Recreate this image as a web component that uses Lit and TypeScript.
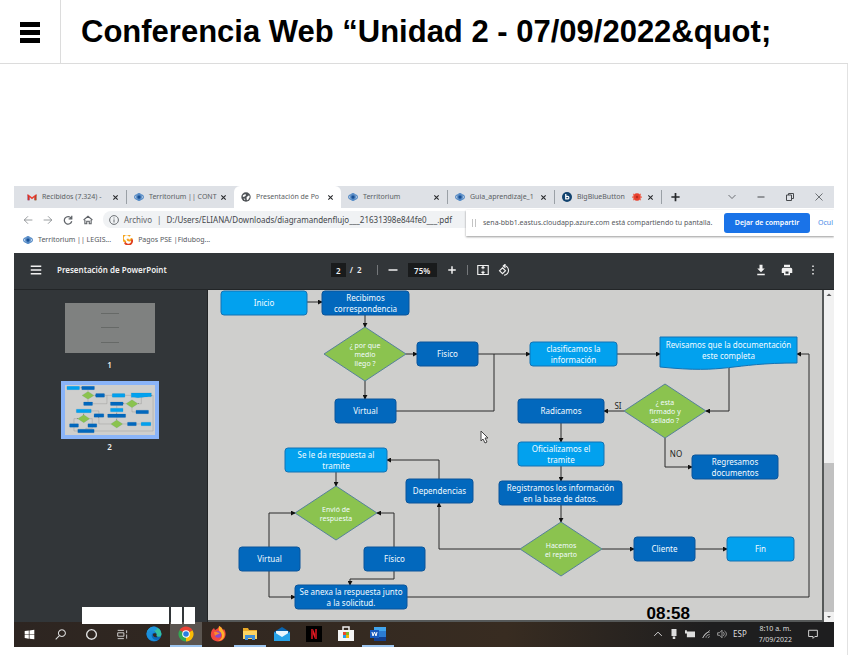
import { LitElement, html, css, svg, nothing } from "lit";
import { customElement, property } from "lit/decorators.js";
import { classMap } from "lit/directives/class-map.js";

type Kind = "light" | "dark" | "diamond" | "document";
interface FlowNode { kind: Kind; x: number; y: number; w: number; h: number; lines: string[]; }

const NODES: FlowNode[] = [
  { kind: "light", x: 13, y: 1, w: 86, h: 24, lines: ["Inicio"] },
  { kind: "dark", x: 114, y: 1, w: 87, h: 24, lines: ["Recibimos", "correspondencia"] },
  { kind: "diamond", x: 116, y: 37, w: 82, h: 54, lines: ["¿ por que", "medio", "llego ?"] },
  { kind: "dark", x: 209, y: 52, w: 61, h: 24, lines: ["Fisico"] },
  { kind: "dark", x: 127, y: 109, w: 61, h: 24, lines: ["Virtual"] },
  { kind: "light", x: 322, y: 52, w: 87, h: 24, lines: ["clasificamos la", "información"] },
  { kind: "document", x: 452, y: 47, w: 137, h: 32, lines: ["Revisamos que la documentación", "este completa"] },
  { kind: "diamond", x: 416, y: 94, w: 82, h: 54, lines: ["¿ esta", "firmado y", "sellado ?"] },
  { kind: "dark", x: 310, y: 109, w: 86, h: 24, lines: ["Radicamos"] },
  { kind: "light", x: 310, y: 152, w: 86, h: 24, lines: ["Oficializamos el", "tramite"] },
  { kind: "dark", x: 291, y: 191, w: 123, h: 24, lines: ["Registramos los información", "en la base de datos."] },
  { kind: "dark", x: 484, y: 165, w: 86, h: 24, lines: ["Regresamos", "documentos"] },
  { kind: "light", x: 77, y: 158, w: 102, h: 24, lines: ["Se le da respuesta al", "tramite"] },
  { kind: "dark", x: 198, y: 189, w: 67, h: 24, lines: ["Dependencias"] },
  { kind: "diamond", x: 87, y: 196, w: 82, h: 54, lines: ["Envió de", "respuesta"] },
  { kind: "dark", x: 31, y: 257, w: 61, h: 24, lines: ["Virtual"] },
  { kind: "dark", x: 156, y: 257, w: 61, h: 24, lines: ["Físico"] },
  { kind: "dark", x: 87, y: 295, w: 112, h: 24, lines: ["Se anexa la respuesta junto", "a la solicitud."] },
  { kind: "diamond", x: 312, y: 232, w: 82, h: 54, lines: ["Hacemos", "el reparto"] },
  { kind: "dark", x: 426, y: 247, w: 61, h: 24, lines: ["Cliente"] },
  { kind: "light", x: 519, y: 247, w: 67, h: 24, lines: ["Fin"] },
];

const ARROWS = [
  "99,12 114,12", "157,25 157,37", "198,64 209,64", "157,91 157,109", "270,64 322,64",
  "409,64 452,64", "521,78 521,121 498,121", "416,121 396,121", "353,133 353,152",
  "353,176 353,191", "353,215 353,232", "394,259 426,259", "487,259 519,259",
  "312,259 231,259 231,213", "231,189 231,170 179,170", "128,182 128,196",
  "61,257 61,223 87,223", "186,257 186,223 169,223", "61,281 61,307 87,307",
  "186,281 186,289 142,289 142,295", "199,307 601,307 601,64 589,64", "457,148 457,177 484,177",
];

@customElement("flow-chart")
export class FlowChart extends LitElement {
  @property({ type: Boolean }) mini = false;

  static styles = css`
    :host { display: block; }
    svg { display: block; width: 100%; height: auto; }
    .light, .document { fill: #02a1ee; stroke: #1273b4; }
    .dark { fill: #0268bd; stroke: #0a559b; }
    .diamond { fill: #8bc34f; stroke: #56819a; }
    .edge { fill: none; stroke: #2b2b2b; }
    .label { font: 8px "Noto Sans", sans-serif; fill: #f2fbff; text-anchor: middle; }
    .small { font-size: 7px; }
    .tag { fill: #222; }
  `;

  private shape(n: FlowNode) {
    const { x, y, w, h } = n;
    if (n.kind === "diamond") {
      return svg`<polygon class="diamond" points="${x},${y + h / 2} ${x + w / 2},${y} ${x + w},${y + h / 2} ${x + w / 2},${y + h}"/>`;
    }
    if (n.kind === "document") {
      return svg`<path class="document" d="M${x} ${y}h${w}v${h - 6}c-${w / 2} 0 -${w / 2} 11 -${w} 4z"/>`;
    }
    return svg`<rect class=${n.kind} x=${x} y=${y} width=${w} height=${h} rx="3"/>`;
  }

  private label(n: FlowNode) {
    const small = n.kind === "diamond";
    const step = small ? 9 : 11;
    const mid = n.y + n.h / 2 - (n.kind === "document" ? 3 : 0);
    const first = mid + 3 - ((n.lines.length - 1) * step) / 2;
    return n.lines.map((t, i) => svg`<text class=${small ? "label small" : "label"} x=${n.x + n.w / 2} y=${first + i * step}>${t}</text>`);
  }

  render() {
    return html`<svg viewBox="0 0 614 330" role="img" aria-label="Diagrama de flujo">
      <defs><marker id="tip" viewBox="0 0 6 6" refX="5" refY="3" markerWidth="5" markerHeight="5" orient="auto"><path d="M0 0L6 3L0 6z" fill="#111"/></marker></defs>
      <polyline class="edge" points="188,121 286,121 286,64"/>
      ${ARROWS.map((p) => svg`<polyline class="edge" points=${p} marker-end="url(#tip)"/>`)}
      ${NODES.map((n) => svg`${this.shape(n)}${this.mini ? nothing : this.label(n)}`)}
      ${this.mini ? nothing : svg`
        <text class="label tag" x="410" y="119">SI</text>
        <text class="label tag" x="468" y="167">NO</text>
        <path d="M273 141v10l2-2 2 4 2-1-2-4h3z" fill="#fff" stroke="#444"/>`}
    </svg>`;
  }
}

const stroke = (d: string, w = 1.5) => svg`<svg viewBox="0 0 16 16" fill="none" stroke="currentColor" stroke-width=${w}><path d=${d}/></svg>`;
const solid = (d: string) => svg`<svg viewBox="0 0 16 16" fill="currentColor"><path fill-rule="evenodd" d=${d}/></svg>`;

const gmail = svg`<svg viewBox="0 0 16 16"><path d="M1 4v9h3V7z" fill="#4285f4"/><path d="M15 4v9h-3V7z" fill="#34a853"/><path d="M1 3l7 5.500 7-5.500v3l-7 5.500-7-5.500z" fill="#ea4335"/><path d="M1 4v9h3V7zM15 4v9h-3V7z" fill="#d93025"/></svg>`;
const territorium = svg`<svg viewBox="0 0 16 16" fill="none" stroke="#5a8ec8"><ellipse cx="8" cy="8" rx="7" ry="4" stroke-width="2"/><ellipse cx="8" cy="8" rx="4" ry="6" stroke-width="1.500"/><circle cx="8" cy="8" r="3" fill="#174f96" stroke="#2467b0"/></svg>`;
const globe = svg`<svg viewBox="0 0 16 16"><circle cx="8" cy="8" r="7.500" fill="#505458"/><path d="M3 5l4-2 1 2-2 2-3 1zM9 8l4-3 1 3-3 5-2-1zM4 10l3 1-1 2z" fill="#fff"/></svg>`;
const bbb = svg`<svg viewBox="0 0 16 16"><circle cx="8" cy="8" r="8" fill="#12436f"/><path d="M6 3v8h3a2 2 0 0 0 0-4H6" fill="none" stroke="#fff" stroke-width="2"/></svg>`;
const rec = svg`<svg viewBox="0 0 16 16"><circle cx="8" cy="8" r="6" fill="#e8412f"/><path d="M2 3l2 2M14 3l-2 2M2 13l2-2M14 13l-2-2M0 8h3M13 8h3" stroke="#ee6a55" stroke-width="2"/><circle cx="8" cy="8" r="2" fill="#b92c1e"/></svg>`;
const pse = svg`<svg viewBox="0 0 16 16" fill="none" stroke-width="3"><path d="M11 2a6 6 0 1 0-6 9" stroke="#f5a51d"/><path d="M7 6c1 4 6 4 7-1" stroke="#f5a51d"/><path d="M3 12a6 6 0 0 0 11-5" stroke="#e0401f"/></svg>`;
const close = stroke("M3 3l10 10M13 3L3 13", 2.5);

const start = svg`<svg viewBox="0 0 16 16" fill="#fff"><path d="M1 3l6-1v5.500H1zM8 2l7-1v6.500H8zM1 8.500h6V14l-6-1zM8 8.500h7V15l-7-1z"/></svg>`;
const edge = svg`<svg viewBox="0 0 16 16"><circle cx="8" cy="8" r="7.500" fill="#0c69b9"/><path d="M1 6a7.500 7.500 0 0 1 14.500 2c0 3-4 3.500-5 2 1-2-1-5-4-5-2 0-4 .5-5.500 1z" fill="#35c1a0"/><path d="M.5 8a7.500 7.500 0 0 1 9-7.300C13 4 9 5 6 5 4 5 2 6 .5 8z" fill="#2196dd"/><path d="M.5 8c1-4 7-5 9-1-3-1-5 2-3 5 1 2 4 2.500 6 1.500A7.500 7.500 0 0 1 .5 8z" fill="#1b8fdc"/><path d="M7 8c1-1 3-1 3.500 0 0 1-1 2 1 3-3 1-5-1-4.500-3z" fill="#35281f"/></svg>`;
const chrome = svg`<svg viewBox="0 0 16 16"><path d="M8 8L1.500 4.250A7.500 7.500 0 0 1 14.500 4.250z" fill="#ea4335"/><path d="M8 8l6.500-3.750A7.500 7.500 0 0 1 8 15.500z" fill="#fbbc05"/><path d="M8 8v7.500A7.500 7.500 0 0 1 1.500 4.250z" fill="#34a853"/><circle cx="8" cy="8" r="3.800" fill="#fff"/><circle cx="8" cy="8" r="2.800" fill="#2a7de1"/></svg>`;
const firefox = svg`<svg viewBox="0 0 16 16"><path d="M2 4l2-2 1 2c3-1 4-3 4-4 4 2 3 3 4 4l1-1c4 6 0 12.500-6 12.500S-1 10 2 4z" fill="#f4483c"/><path d="M9 0c4 2 3 4 5 6 2 5-2 9-6 9 5-2 5-7 2-9C8 4 9 2 9 0z" fill="#fdb32c"/><circle cx="8" cy="8.500" r="3.200" fill="#8a4bc8"/><path d="M4 6c3-1 4 1 6 1-2 2-4 1-5 3z" fill="#fb8a2c"/></svg>`;
const folder = svg`<svg viewBox="0 0 16 16"><path d="M1 2h5l1 2h8v9H1z" fill="#e9a927"/><path d="M1 5h14v8H1z" fill="#fcd462"/><path d="M3 14V9h10v5h-3v-2H6v2z" fill="#3f8fd8"/></svg>`;
const mail = svg`<svg viewBox="0 0 16 16"><path d="M0 6l8-5 8 5v8H0z" fill="#0a64ad"/><path d="M2 5h12v6H2z" fill="#e9f5fd"/><path d="M0 6l8 5 8-5v9H0z" fill="#26a2e8"/></svg>`;
const netflix = svg`<svg viewBox="0 0 16 16"><path d="M0 0h16v16H0z" fill="#000"/><path d="M5 3h2l4 10H9z" fill="#e31b23"/><path d="M5 3h2v10H5zM9 3h2v10H9z" fill="#a81018"/></svg>`;
const store = svg`<svg viewBox="0 0 16 16"><path d="M5 5V1h6v4" fill="none" stroke="#eee" stroke-width="1.500"/><path d="M0 4h16v11H0z" fill="#f4f4f4"/><path d="M5 6h3v3H5z" fill="#ea4a2a"/><path d="M8 6h3v3H8z" fill="#7db928"/><path d="M5 9h3v3H5z" fill="#22a0e8"/><path d="M8 9h3v3H8z" fill="#f8b500"/></svg>`;
const word = svg`<svg viewBox="0 0 16 16"><path d="M4 1h12v14H4z" fill="#2b7cd3"/><path d="M4 1h12v4H4z" fill="#41a5ee"/><path d="M4 11h12v4H4z" fill="#103f91"/><path d="M0 4h9v8H0z" fill="#185abd"/><path d="M2 6l1 4 1.500-4L6 10l1-4" fill="none" stroke="#fff"/></svg>`;

const TABS = [
  { icon: gmail, text: "Recibidos (7.324) -" },
  { icon: territorium, text: "Territorium || CONT" },
  { icon: globe, text: "Presentación de Po", active: true },
  { icon: territorium, text: "Territorium" },
  { icon: territorium, text: "Guia_aprendizaje_1" },
  { icon: bbb, text: "BigBlueButton", badge: true },
];

const SYSTEM = [
  { name: "Inicio", icon: start },
  { name: "Buscar", icon: stroke("M6 10L1 15M10 1a5 5 0 1 0 .1 0z", 1.5) },
  { name: "Cortana", icon: stroke("M8 1a7 7 0 1 0 .1 0z", 2) },
  { name: "Vista de tareas", icon: stroke("M1 2h9M1 5.500h9v5H1zM1 14h9M14 2v4M14 8v6", 1.3) },
];
const APPS = [
  { name: "Edge", icon: edge },
  { name: "Chrome", icon: chrome, active: true, open: true },
  { name: "Firefox", icon: firefox },
  { name: "Explorador", icon: folder, open: true },
  { name: "Correo", icon: mail },
  { name: "Netflix", icon: netflix },
  { name: "Store", icon: store },
  { name: "Word", icon: word, open: true },
];

@customElement("app-root")
export class AppRoot extends LitElement {
  static styles = css`
    :host { display: flex; flex-direction: column; min-height: 100vh; background: #fff; color: #000; font-family: "Liberation Sans", Arial, sans-serif; }
    * { box-sizing: border-box; }
    button, input { font: inherit; color: inherit; border: 0; padding: 0; margin: 0; background: none; min-width: 0; }
    svg { display: block; width: 100%; height: 100%; }

    .header { display: flex; align-items: center; height: 64px; border-bottom: 1px solid #dcdcdc; }
    .menu { align-self: stretch; width: 61px; border-right: 1px solid #dcdcdc; display: flex; flex-direction: column; align-items: center; justify-content: center; gap: 3px; flex: none; padding-top: 2px; }
    .bar { width: 20px; height: 5px; background: #000; }
    h1 { margin: 0 0 0 20px; font-size: 31px; line-height: 40px; font-weight: bold; white-space: nowrap; }
    .main { flex: 1; padding: 122px 13px 8px 14px; border-right: 1px solid #e2e2e2; }

    .screen { position: relative; font: 8px/12px "Noto Sans", sans-serif; background: #fff; overflow: hidden; }
    .icon { width: 10px; height: 10px; flex: none; display: block; }

    .tabs { display: flex; height: 22px; padding-left: 6px; background: #dee1e6; color: #5a5e63; font-size: 7px; }
    .tab { display: flex; align-items: center; gap: 5px; flex: 0 1 107px; padding: 0 7px; text-align: left; }
    .tab.active { background: #fff; border-radius: 6px 6px 0 0; }
    .tab.line { border-right: 1px solid #9aa0a6; border-image: linear-gradient(transparent 20%, #9aa0a6 20% 80%, transparent 80%) 1; }
    .name { flex: 1; min-width: 0; white-space: nowrap; }
    .x { width: 7px; height: 7px; flex: none; color: #26282b; }
    .plus { width: 11px; margin: 0 auto 0 8px; color: #26282b; }
    .wins { display: flex; align-items: center; gap: 21px; padding-right: 11px; color: #46494d; }
    .wins .icon { width: 8px; height: 8px; }

    .nav { display: flex; align-items: center; height: 23px; padding: 0 9px; gap: 10px; color: #5f6368; }
    .url { flex: 1; display: flex; align-items: center; gap: 5px; height: 17px; padding-left: 6px; border-radius: 8px; background: #f0f2f4; }
    .url input { flex: 1; color: #44474b; outline: 0; }
    .marks { display: flex; align-items: center; height: 22px; padding: 0 0 4px 9px; gap: 12px; font-size: 7px; }
    .marks a { display: flex; align-items: center; gap: 5px; color: #55585c; text-decoration: none; }

    .share { position: absolute; right: 0; top: 24px; width: 368px; height: 26px; display: flex; align-items: center; padding-left: 6px; background: #fff; box-shadow: 0 1px 2px #0006; font-size: 7px; color: #55585c; white-space: nowrap; overflow: hidden; }
    .grip { width: 4px; height: 8px; border: solid #c4c4c4; border-width: 0 1px; margin-right: 7px; flex: none; }
    .msg { flex: 1 0 auto; }
    .stop { width: 86px; height: 20px; flex: none; border-radius: 3px; background: #1a73e8; color: #fff; font-weight: 600; }
    .hide { width: 24px; flex: none; padding-left: 8px; color: #4a8ae8; text-align: left; }

    .pdf { display: flex; align-items: center; height: 36px; padding: 0 15px 2px 16px; background: #323639; color: #f1f1f1; }
    .pdf .icon { width: 12px; height: 12px; }
    .doc { margin-left: 15px; font-weight: 600; flex: 1; white-space: nowrap; }
    .tools { display: flex; align-items: center; flex: 1.55; gap: 9px; font-weight: 600; }
    .tools input { background: #191b1c; height: 14px; text-align: center; width: 15px; }
    .tools .zoom { width: 29px; }
    .tools .div { width: 1px; height: 10px; background: #74777a; }
    .page { display: flex; align-items: center; gap: 4px; margin-right: 6px; }
    .right { display: flex; gap: 14px; }

    .viewer { display: flex; background: #323639; border-top: 1px solid #222527; }
    .side { width: 194px; flex: none; display: flex; flex-direction: column; align-items: center; padding: 13px 2px 0 0; color: #eee; font-weight: 600; border-right: 1px solid #212425; }
    .thumb { width: 90px; height: 50px; background: #7f8180; display: flex; flex-direction: column; align-items: center; justify-content: space-around; margin: 0 0 6px; padding: 3px; }
    .rule { width: 18px; height: 1px; background: #666967; }
    .thumb.active { width: 98px; height: 58px; margin: 10px 0 2px; padding: 0; border: 4px solid #8ab4f8; background: #cfcfcd; }
    .thumb.active flow-chart { width: 90px; }
    .sheet { flex: 1; min-width: 0; background: #cfcfcd; border: solid #555858; border-width: 0 2px 2px 0; }
    .scroll { width: 10px; flex: none; display: flex; flex-direction: column; align-items: center; background: #f1f1f1; color: #555; }
    .scroll .icon { width: 8px; height: 10px; }
    .thumbbar { width: 100%; background: #c1c1c1; flex: 149; }
    .gap { flex: 163; }

    .blocks { position: absolute; left: 68px; bottom: 23px; display: flex; gap: 2px; }
    .block { height: 17px; width: 11px; background: #fff; }
    .block.wide { width: 87px; }
    .timer { position: absolute; right: 144px; bottom: 26px; height: 16px; font: bold 17px/17px "Liberation Sans", sans-serif; color: #000; }

    .task { position: relative; display: flex; height: 25px; background: linear-gradient(90deg, #2d2521, #382c21 60%, #1e1e1f 85%); color: #ddd; font-size: 7px; line-height: 12px; }
    .app { width: 32px; display: flex; align-items: center; justify-content: center; flex: none; border-bottom: 2px solid transparent; padding-top: 1px; }
    .app .icon { width: 16px; height: 16px; }
    .app.sys { width: 31px; }
    .app.sys .icon { width: 11px; height: 11px; }
    .app.open { border-color: #9cc4ee; }
    .app.active { background-color: #5b5550; }
    .tray { margin-left: auto; display: flex; align-items: center; gap: 6px; padding: 0 16px 2px 0; }
    .lang { font-size: 8px; }
    .clock { text-align: center; margin: 0 10px 0 6px; line-height: 11px; }
  `;

  private ic(icon: unknown) { return html`<span class="icon">${icon}</span>`; }
  private btn(name: string, icon: unknown) { return html`<button class="icon" aria-label=${name}>${icon}</button>`; }

  render() {
    return html`
      <header class="header">
        <button class="menu" aria-label="Menú"><span class="bar"></span><span class="bar"></span><span class="bar"></span></button>
        <h1>Conferencia Web “Unidad 2 - 07/09/2022&amp;quot;</h1>
      </header>
      <main class="main"><section class="screen">
        <div class="tabs">
          ${TABS.map((t, i) => html`<button class=${classMap({ tab: true, active: !!t.active, line: i === 0 || i > 2 })}>
            ${this.ic(t.icon)}<span class="name">${t.text}</span>${t.badge ? this.ic(rec) : nothing}<span class="x">${close}</span></button>`)}
          <button class="plus" aria-label="Nueva pestaña">${stroke("M8 2v12M2 8h12", 2.5)}</button>
          <div class="wins">
            ${this.btn("Buscar pestañas", stroke("M1 4l7 7 7-7"))}
            ${this.btn("Minimizar", stroke("M1 8h14", 2))}
            ${this.btn("Restaurar", stroke("M1 4h10v11H1zM5 4V1h10v10h-4", 2))}
            ${this.btn("Cerrar", stroke("M1 1l14 14M15 1L1 15"))}
          </div>
        </div>
        <div class="nav">
          ${this.btn("Atrás", stroke("M15 8H2M8 2L2 8l6 6", 1))}
          ${this.btn("Adelante", stroke("M1 8h13M8 2l6 6-6 6", 1))}
          ${this.btn("Recargar", stroke("M13 5a6 6 0 1 0 1 5M14 1v5H9", 2))}
          ${this.btn("Inicio", stroke("M1 8l7-6 7 6M3 8v6h3v-4h4v4h3V8", 1.8))}
          <div class="url">${this.ic(stroke("M8 1a7 7 0 1 0 .1 0zM8 7v5M8 4v1.500"))}<span>Archivo</span><span>|</span>
            <input aria-label="Dirección" value="D:/Users/ELIANA/Downloads/diagramandenflujo___21631398e844fe0___.pdf"></div>
        </div>
        <div class="marks">
          <a href="#">${this.ic(territorium)}Territorium || LEGIS...</a>
          <a href="#">${this.ic(pse)}Pagos PSE |Fidubog...</a>
        </div>
        <div class="share"><span class="grip"></span><span class="msg">sena-bbb1.eastus.cloudapp.azure.com está compartiendo tu pantalla.</span>
          <button class="stop">Dejar de compartir</button><button class="hide">Ocul</button></div>
        <div class="pdf">
          ${this.btn("Menú lateral", stroke("M1 3h14M1 8h14M1 13h14", 1.8))}
          <span class="doc">Presentación de PowerPoint</span>
          <div class="tools">
            <label class="page"><input aria-label="Página" value="2"><span>/&nbsp; 2</span></label>
            <span class="div"></span>
            ${this.btn("Alejar", stroke("M2 8h12", 2))}
            <input class="zoom" aria-label="Zoom" value="75%">
            ${this.btn("Acercar", stroke("M8 3v10M3 8h10", 2))}
            <span class="div"></span>
            ${this.btn("Ajustar", stroke("M1 2h14v12H1zM8 4v3M6 5.500L8 3.500l2 2M8 12V9M6 10.500l2 2 2-2"))}
            ${this.btn("Girar", stroke("M6 5l4 4-4 4-4-4zM7 2a6.500 6.500 0 0 1 1 13M10 0L7 2.500 10 5"))}
          </div>
          <div class="right">
            ${this.btn("Descargar", solid("M6 1h4v5h3l-5 5-5-5h3zM3 13h10v2H3z"))}
            ${this.btn("Imprimir", solid("M4 1h8v3H4zM3 5h10a2 2 0 0 1 2 2v5h-3v3H4v-3H1V7a2 2 0 0 1 2-2zM6 10v3h4v-3z"))}
            ${this.btn("Más", solid("M7 2h2v2H7zM7 7h2v2H7zM7 12h2v2H7z"))}
          </div>
        </div>
        <div class="viewer">
          <div class="side">
            <button class="thumb" aria-label="Página 1"><span class="rule"></span><span class="rule"></span><span class="rule"></span></button><span>1</span>
            <button class="thumb active" aria-label="Página 2"><flow-chart mini></flow-chart></button><span>2</span>
          </div>
          <div class="sheet"><flow-chart></flow-chart></div>
          <div class="scroll">${this.ic(solid("M3 10l5-5 5 5z"))}<span class="gap"></span><span class="thumbbar"></span>${this.ic(solid("M4 6l4 4 4-4z"))}</div>
        </div>
        <div class="task">
          ${SYSTEM.map((a) => html`<button class="app sys" aria-label=${a.name}>${this.ic(a.icon)}</button>`)}
          ${APPS.map((a) => html`<button class=${classMap({ app: true, open: !!a.open, active: !!a.active })} aria-label=${a.name}>${this.ic(a.icon)}</button>`)}
          <div class="tray">
            ${this.ic(stroke("M2 11l6-6 6 6"))}
            ${this.ic(solid("M4 0h8v11H4zM6 12h4v4H6z"))}
            ${this.ic(solid("M0 2h3v2h13v9H3V7H0z"))}
            ${this.ic(stroke("M2 14L14 2M4 14c0-5 4-9 10-9M8 14c0-3 2-5 6-5M11 14l3-2", 1))}
            ${this.ic(stroke("M1 6h3l4-4v12l-4-4H1zM10 5c2 2 2 4 0 6M12 3c4 3 4 7 0 10", 1))}
            <span class="lang">ESP</span>
            <div class="clock">8:10 a. m.<br>7/09/2022</div>
            ${this.btn("Notificaciones", stroke("M1 2h14v10h-4l-3 3v-3H1z"))}
          </div>
          <div class="blocks"><span class="block wide"></span><span class="block"></span><span class="block"></span></div>
          <div class="timer">08:58</div>
        </div>
      </section></main>`;
  }
}
